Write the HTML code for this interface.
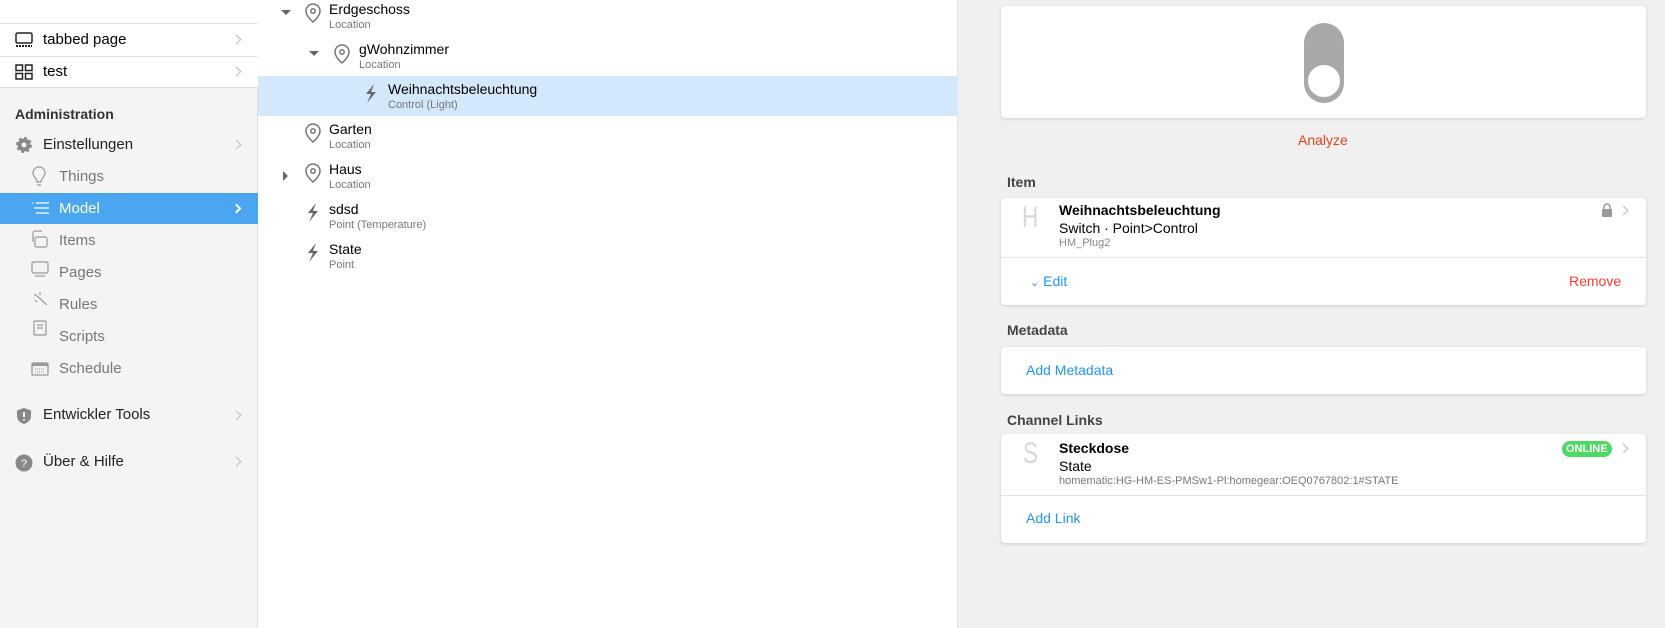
<!DOCTYPE html>
<html><head><meta charset="utf-8"><style>
*{box-sizing:border-box;margin:0;padding:0}
body{width:1665px;height:628px;overflow:hidden;font-family:"Liberation Sans",sans-serif;background:#f0f0f0;position:relative;color:#000}
.a{position:absolute;white-space:nowrap}
#side{position:absolute;left:0;top:0;width:258px;height:628px;background:#f4f4f4;border-right:1px solid #ddd}
.chev{position:absolute;left:233px;width:7px;height:7px;border-right:1.5px solid #bbb;border-top:1.5px solid #bbb;transform:rotate(45deg)}
#mid{position:absolute;left:258px;top:0;width:700px;height:628px;background:#fff;border-right:1px solid #e0e0e0}
.t{font-size:14px}
.s{font-size:11px;color:#777}
.card{position:absolute;left:1001px;width:645px;background:#fff;border-radius:4px;box-shadow:0 1px 3px rgba(0,0,0,.15)}
.h{font-size:14px;font-weight:bold;color:#444;left:1007px}
.link{color:#2196f3;font-size:14px}
.big{font-size:30px;color:#d8d8d8;transform:scaleX(0.75);transform-origin:left top}
</style></head><body>
<div id="side">
 <div class="a" style="left:0;top:0;width:258px;height:88px;background:#fff;border-bottom:1px solid #ddd"></div>
 <div class="a" style="left:0;top:23px;width:258px;border-top:1px solid #e4e4e4"></div>
 <div class="a" style="left:0;top:56px;width:258px;border-top:1px solid #e4e4e4"></div>
 <svg class="a" style="left:15px;top:32px" width="18" height="16"><rect x="1" y="1" width="16" height="10" rx="1.5" fill="none" stroke="#222" stroke-width="1.5"/><path d="M1 14h16" stroke="#222" stroke-width="2" stroke-dasharray="2 1"/></svg>
 <div class="a t" style="left:43px;top:31px;font-size:15px">tabbed page</div><div class="chev" style="top:36px"></div>
 <svg class="a" style="left:15px;top:64px" width="18" height="16" fill="none" stroke="#222" stroke-width="1.5"><rect x="1" y="1" width="6.5" height="5.5"/><rect x="10.5" y="1" width="6.5" height="5.5"/><rect x="1" y="9.5" width="6.5" height="5.5"/><rect x="10.5" y="9.5" width="6.5" height="5.5"/></svg>
 <div class="a t" style="left:43px;top:63px;font-size:15px">test</div><div class="chev" style="top:68px"></div>
 <div class="a" style="left:15px;top:106px;font-size:14px;font-weight:bold;color:#333">Administration</div>
 <svg class="a" style="left:15px;top:136px" width="18" height="18"><circle cx="9" cy="9" r="6.5" fill="#888" stroke="#888" stroke-width="3" stroke-dasharray="2.5 2.6"/><circle cx="9" cy="9" r="2.5" fill="#f4f4f4"/></svg>
 <div class="a" style="left:43px;top:136px;font-size:15px;color:#222">Einstellungen</div><div class="chev" style="top:141px"></div>
 <div class="a" style="left:0;top:193px;width:258px;height:31px;background:#4aa6f0"></div>
 <div class="a" style="left:59px;top:168px;font-size:15px;color:#777">Things</div>
 <div class="a" style="left:59px;top:200px;font-size:15px;color:#fff">Model</div>
 <div class="chev" style="top:205px;border-color:#fff;border-width:2px"></div>
 <svg class="a" style="left:31px;top:201px" width="19" height="14" stroke="#fff" stroke-width="1.3"><path d="M1 2h1M5 2h13M3 7h15M5 12h13"/></svg>
 <div class="a" style="left:59px;top:232px;font-size:15px;color:#777">Items</div>
 <div class="a" style="left:59px;top:264px;font-size:15px;color:#777">Pages</div>
 <div class="a" style="left:59px;top:296px;font-size:15px;color:#777">Rules</div>
 <div class="a" style="left:59px;top:328px;font-size:15px;color:#777">Scripts</div>
 <div class="a" style="left:59px;top:360px;font-size:15px;color:#777">Schedule</div>
 <svg class="a" style="left:31px;top:166px" width="18" height="170" fill="none" stroke="#999" stroke-width="1.2">
  <path d="M6 16c0-4-4-5-4-9a6 6 0 0112 0c0 4-4 5-4 9zM6 19h4"/>
  <rect x="4" y="71" width="12" height="10" rx="2"/><path d="M2 76V67a2 2 0 012-2h7"/>
  <rect x="1" y="96" width="16" height="11" rx="1.5"/><path d="M4 110h10"/>
  <path d="M6 130l10 9M3 129h3M4 134l2 2M9 126v3"/>
  <rect x="3" y="155" width="12" height="14" rx="1"/><path d="M6 159h6M6 162h6"/>
 </svg>
 <svg class="a" style="left:31px;top:362px" width="18" height="14"><rect x="1" y="1" width="16" height="12" rx="1" fill="none" stroke="#999" stroke-width="1.3"/><rect x="1" y="1" width="16" height="3" fill="#999"/><path d="M4 7h10M4 10h10" stroke="#999" stroke-dasharray="1 1"/></svg>
 <svg class="a" style="left:16px;top:407px" width="16" height="18"><path d="M8 1l7 2.5v5.5c0 4.5-3.5 6.8-7 8-3.5-1.2-7-3.5-7-8V3.5z" fill="#888"/><path d="M8 5v5M8 12v1.5" stroke="#fff" stroke-width="1.8"/></svg>
 <div class="a" style="left:43px;top:406px;font-size:15px;color:#222">Entwickler Tools</div><div class="chev" style="top:412px"></div>
 <svg class="a" style="left:15px;top:454px" width="18" height="18"><circle cx="9" cy="9" r="8.5" fill="#888"/><text x="9" y="13" font-size="11" fill="#fff" text-anchor="middle" font-family="Liberation Sans">?</text></svg>
 <div class="a" style="left:43px;top:453px;font-size:15px;color:#222">Über &amp; Hilfe</div><div class="chev" style="top:458px"></div>
</div>
<div id="mid">
 <div class="a" style="left:0;top:76px;width:700px;height:40px;background:#d3e8fb"></div>
</div>
<svg class="a" style="left:275px;top:0" width="120" height="270">
 <path d="M6 10l5 5 5-5z" fill="#666"/><path d="M34 51l5 5 5-5z" fill="#666"/><path d="M8 171l5 5-5 5z" fill="#666"/>
 <g fill="none" stroke="#777" stroke-width="1.5">
  <path d="M38 22c-4.5-4-7-7.5-7-11a7 7 0 0114 0c0 3.5-2.5 7-7 11z"/><circle cx="38" cy="11" r="2.2"/>
  <path d="M67 63c-4.5-4-7-7.5-7-11a7 7 0 0114 0c0 3.5-2.5 7-7 11z"/><circle cx="67" cy="52" r="2.2"/>
  <path d="M38 142c-4.5-4-7-7.5-7-11a7 7 0 0114 0c0 3.5-2.5 7-7 11z"/><circle cx="38" cy="131" r="2.2"/>
  <path d="M38 182c-4.5-4-7-7.5-7-11a7 7 0 0114 0c0 3.5-2.5 7-7 11z"/><circle cx="38" cy="171" r="2.2"/>
 </g>
 <g fill="#666"><path d="M99 84l-8 10h5l-4 9 9-11h-5z"/><path d="M41 203l-8 10h5l-4 9 9-11h-5z"/><path d="M41 243l-8 10h5l-4 9 9-11h-5z"/></g>
</svg>
<div class="a t" style="left:329px;top:1px">Erdgeschoss</div><div class="a s" style="left:329px;top:19px">Location</div>
<div class="a t" style="left:359px;top:41px">gWohnzimmer</div><div class="a s" style="left:359px;top:59px">Location</div>
<div class="a t" style="left:388px;top:81px">Weihnachtsbeleuchtung</div><div class="a s" style="left:388px;top:99px">Control (Light)</div>
<div class="a t" style="left:329px;top:121px">Garten</div><div class="a s" style="left:329px;top:139px">Location</div>
<div class="a t" style="left:329px;top:161px">Haus</div><div class="a s" style="left:329px;top:179px">Location</div>
<div class="a t" style="left:329px;top:201px">sdsd</div><div class="a s" style="left:329px;top:219px">Point (Temperature)</div>
<div class="a t" style="left:329px;top:241px">State</div><div class="a s" style="left:329px;top:259px">Point</div>

<div class="card" style="top:6px;height:112px"></div>
<div class="a" style="left:1304px;top:23px;width:40px;height:80px;border-radius:20px;background:#a8a8a8"></div>
<div class="a" style="left:1306px;top:63px;width:36px;height:36px;border-radius:50%;background:#fff;border:2px solid #a8a8a8"></div>
<div class="a" style="left:1298px;top:132px;font-size:14px;color:#e2421b">Analyze</div>

<div class="a h" style="top:174px">Item</div>
<div class="card" style="top:198px;height:107px"></div>
<div class="a big" style="left:1022px;top:201px">H</div>
<div class="a" style="left:1059px;top:202px;font-size:14px;font-weight:bold">Weihnachtsbeleuchtung</div>
<div class="a" style="left:1059px;top:220px;font-size:14px">Switch · Point&gt;Control</div>
<div class="a" style="left:1059px;top:237px;font-size:11px;color:#888">HM_Plug2</div>
<svg class="a" style="left:1601px;top:203px" width="12" height="14"><path d="M3 6V4a3 3 0 016 0v2" fill="none" stroke="#999" stroke-width="1.5"/><rect x="1" y="6" width="10" height="8" rx="1" fill="#999"/></svg>
<div class="chev" style="left:1620px;top:207px"></div>
<div class="a" style="left:1001px;top:257px;width:645px;border-top:1px solid #e4e4e4"></div>
<div class="a link" style="left:1030px;top:273px"><span style="font-size:11px">⌄</span> Edit</div>
<div class="a" style="left:1569px;top:273px;font-size:14px;color:#ff3b30">Remove</div>

<div class="a h" style="top:322px">Metadata</div>
<div class="card" style="top:347px;height:47px"></div>
<div class="a link" style="left:1026px;top:362px">Add Metadata</div>

<div class="a h" style="top:412px">Channel Links</div>
<div class="card" style="top:434px;height:109px"></div>
<div class="a big" style="left:1023px;top:437px">S</div>
<div class="a" style="left:1059px;top:440px;font-size:14px;font-weight:bold">Steckdose</div>
<div class="a" style="left:1059px;top:458px;font-size:14px">State</div>
<div class="a" style="left:1059px;top:475px;font-size:11px;color:#777">homematic:HG-HM-ES-PMSw1-Pl:homegear:OEQ0767802:1#STATE</div>
<div class="a" style="left:1562px;top:441px;background:#4cd964;color:#fff;font-size:11px;font-weight:bold;padding:2px 4px;border-radius:9px">ONLINE</div>
<div class="chev" style="left:1620px;top:445px"></div>
<div class="a" style="left:1001px;top:495px;width:645px;border-top:1px solid #e4e4e4"></div>
<div class="a link" style="left:1026px;top:510px">Add Link</div>
</body></html>
